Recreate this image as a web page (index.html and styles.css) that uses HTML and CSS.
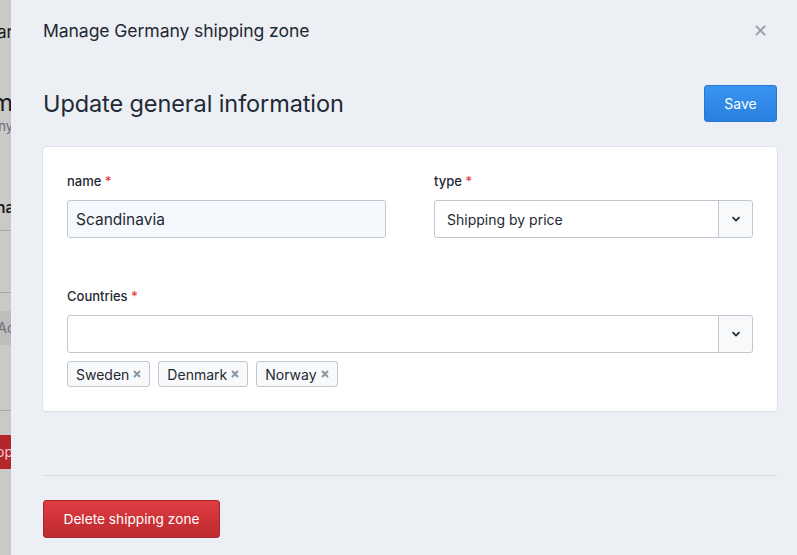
FILE: index.html
```html
<!DOCTYPE html>
<html lang="en">
<head>
<meta charset="utf-8">
<title>Manage Germany shipping zone</title>
<link rel="stylesheet" href="styles.css">
</head>
<body>
<div class="screen">
  <div class="backdrop" aria-hidden="true">
    <div class="bd-row bd-title"><span>ar</span></div>
    <div class="bd-row bd-big"><span>m</span></div>
    <div class="bd-row bd-sub"><span>ny</span></div>
    <div class="bd-row bd-name"><span>na</span></div>
    <div class="bd-line"></div>
    <div class="bd-line bd-line2"></div>
    <div class="bd-row bd-box"><span>Ac</span></div>
    <div class="bd-line bd-line3"></div>
    <div class="bd-row bd-red"><span>op</span></div>
  </div>
  <div class="panel">
    <header class="panel-head">
      <h1 class="panel-title">Manage Germany shipping zone</h1>
      <button class="close" aria-label="Close">
        <svg width="11" height="11" viewBox="0 0 11 11"><path d="M1.5 1.5l8 8M9.5 1.5l-8 8" stroke="#9aa5b1" stroke-width="2" stroke-linecap="round"/></svg>
      </button>
    </header>
    <div class="section-head">
      <h2 class="section-title">Update general information</h2>
      <button class="btn btn-primary">Save</button>
    </div>
    <div class="card">
      <div class="grid">
        <div class="field">
          <label class="label">name <span class="req">*</span></label>
          <div class="input input-focus">Scandinavia</div>
        </div>
        <div class="field">
          <label class="label">type <span class="req">*</span></label>
          <div class="select">
            <div class="select-value">Shipping by price</div>
            <div class="select-btn"><svg width="10" height="6" viewBox="0 0 10 6"><path d="M1.5 1.2L5 4.6l3.5-3.4" fill="none" stroke="#1f2933" stroke-width="1.8"/></svg></div>
          </div>
        </div>
      </div>
      <div class="field field-wide">
        <label class="label">Countries <span class="req">*</span></label>
        <div class="select">
          <div class="select-value"></div>
          <div class="select-btn"><svg width="10" height="6" viewBox="0 0 10 6"><path d="M1.5 1.2L5 4.6l3.5-3.4" fill="none" stroke="#1f2933" stroke-width="1.8"/></svg></div>
        </div>
        <div class="tags">
          <span class="tag">Sweden <svg class="tag-x" width="8" height="8" viewBox="0 0 8 8"><path d="M1 1l6 6M7 1L1 7" stroke="#8a96a3" stroke-width="2"/></svg></span>
          <span class="tag">Denmark <svg class="tag-x" width="8" height="8" viewBox="0 0 8 8"><path d="M1 1l6 6M7 1L1 7" stroke="#8a96a3" stroke-width="2"/></svg></span>
          <span class="tag">Norway <svg class="tag-x" width="8" height="8" viewBox="0 0 8 8"><path d="M1 1l6 6M7 1L1 7" stroke="#8a96a3" stroke-width="2"/></svg></span>
        </div>
      </div>
    </div>
    <div class="divider"></div>
    <div class="footer">
      <button class="btn btn-danger">Delete shipping zone</button>
    </div>
  </div>
</div>
</body>
</html>
```
FILE: styles.css
```css
* { box-sizing: border-box; }
html, body { margin: 0; height: 100%; }
body {
  font-family: Inter, "Noto Sans", "Liberation Sans", sans-serif;
  color: #1f2933;
  overflow: hidden;
}
.screen { display: flex; height: 555px; }

.backdrop {
  width: 11px;
  flex: none;
  background: #c9c9c9;
  overflow: hidden;
  display: flex;
  flex-direction: column;
  color: #1a1a1a;
}
.bd-row { display: flex; justify-content: flex-end; white-space: nowrap; }
.bd-title { margin-top: 20px; font-size: 17px; height: 24px; line-height: 24px; margin-right: -2px; }
.bd-big { margin-top: 44px; font-size: 24px; height: 30px; line-height: 30px; margin-right: -2px; }
.bd-sub { font-size: 13px; color: #6b6b6b; height: 16px; line-height: 16px; margin-right: -2px; }
.bd-name { margin-top: 64px; font-size: 15px; font-weight: 600; height: 20px; line-height: 20px; margin-right: -3px; }
.bd-line { height: 1px; background: #a8a8a8; margin-top: 12px; }
.bd-line2 { margin-top: 61px; }
.bd-box { margin-top: 18px; background: #bdbdbd; height: 34px; line-height: 34px; font-size: 14px; color: #6e6e6e; margin-right: -4px; }
.bd-line3 { margin-top: 65px; }
.bd-red { margin-top: 24px; height: 34px; line-height: 34px; background: #b3262b; color: #f3d0d0; font-size: 14px; margin-right: -2px; }

.panel {
  flex: 1;
  background: #ecf0f5;
  padding: 0 20px 0 32px;
  display: flex;
  flex-direction: column;
}
.panel-head {
  display: flex;
  align-items: center;
  justify-content: space-between;
  height: 60px;
}
.panel-title { margin: 0; font-size: 17.6px; font-weight: 400; letter-spacing: -0.1px; }
.close {
  border: 0; background: none; padding: 0; margin-right: 11px;
  width: 11px; height: 11px; display: flex; cursor: pointer;
}
.section-head {
  display: flex;
  align-items: center;
  justify-content: space-between;
  margin-top: 25px;
  height: 37px;
}
.section-title { margin: 0; font-size: 23.5px; font-weight: 400; letter-spacing: -0.1px; }

.btn {
  font-family: inherit;
  font-size: 14px;
  color: #fff;
  border-radius: 3px;
  height: 37px;
  cursor: pointer;
}
.btn-primary {
  width: 73px;
  background: linear-gradient(#3893f0, #2a80e0);
  border: 1px solid #2b78d1;
}
.btn-danger {
  width: 177px;
  height: 38px;
  font-size: 13.7px;
  background: linear-gradient(#df3d42, #bd2a2f);
  border: 1px solid #a8262a;
}

.card {
  margin-top: 25px;
  background: #fff;
  border-radius: 4px;
  box-shadow: 0 0 0 1px #dde2e8, 0 1px 2px rgba(0,0,0,0.08);
  padding: 25px 24px 24px;
}
.grid { display: grid; grid-template-columns: 1fr 1fr; column-gap: 48px; }
.field { display: flex; flex-direction: column; }
.field-wide { margin-top: 49px; }
.label { font-size: 13px; font-weight: 500; line-height: 18px; margin-bottom: 10px; color: #1f2933; }
.req { color: #e5484d; font-weight: 600; }
.input {
  height: 38px;
  border: 1px solid #c0c7d0;
  border-radius: 3px;
  padding: 0 8px;
  font-size: 15.5px;
  display: flex;
  align-items: center;
}
.input-focus { background: #f5f9fd; }
.select {
  height: 38px;
  border: 1px solid #c0c7d0;
  border-radius: 3px;
  display: flex;
}
.select-value { flex: 1; display: flex; align-items: center; padding: 0 12px; font-size: 14px; }
.select-btn {
  width: 34px;
  border-left: 1px solid #c0c7d0;
  background: #f8f9fa;
  display: flex; align-items: center; justify-content: center;
  border-radius: 0 3px 3px 0;
}
.tags { display: flex; gap: 8px; margin-top: 8px; }
.tag {
  height: 26px;
  border: 1px solid #c0c7d0;
  border-radius: 3px;
  background: #f8f9fa;
  padding: 0 8px 0 8px;
  display: flex; align-items: center; gap: 4px;
  font-size: 14px;
}
.tag-x { flex: none; }

.divider { margin-top: 64px; height: 1px; background: #d9dde3; }
.footer { margin-top: 24px; }
```
